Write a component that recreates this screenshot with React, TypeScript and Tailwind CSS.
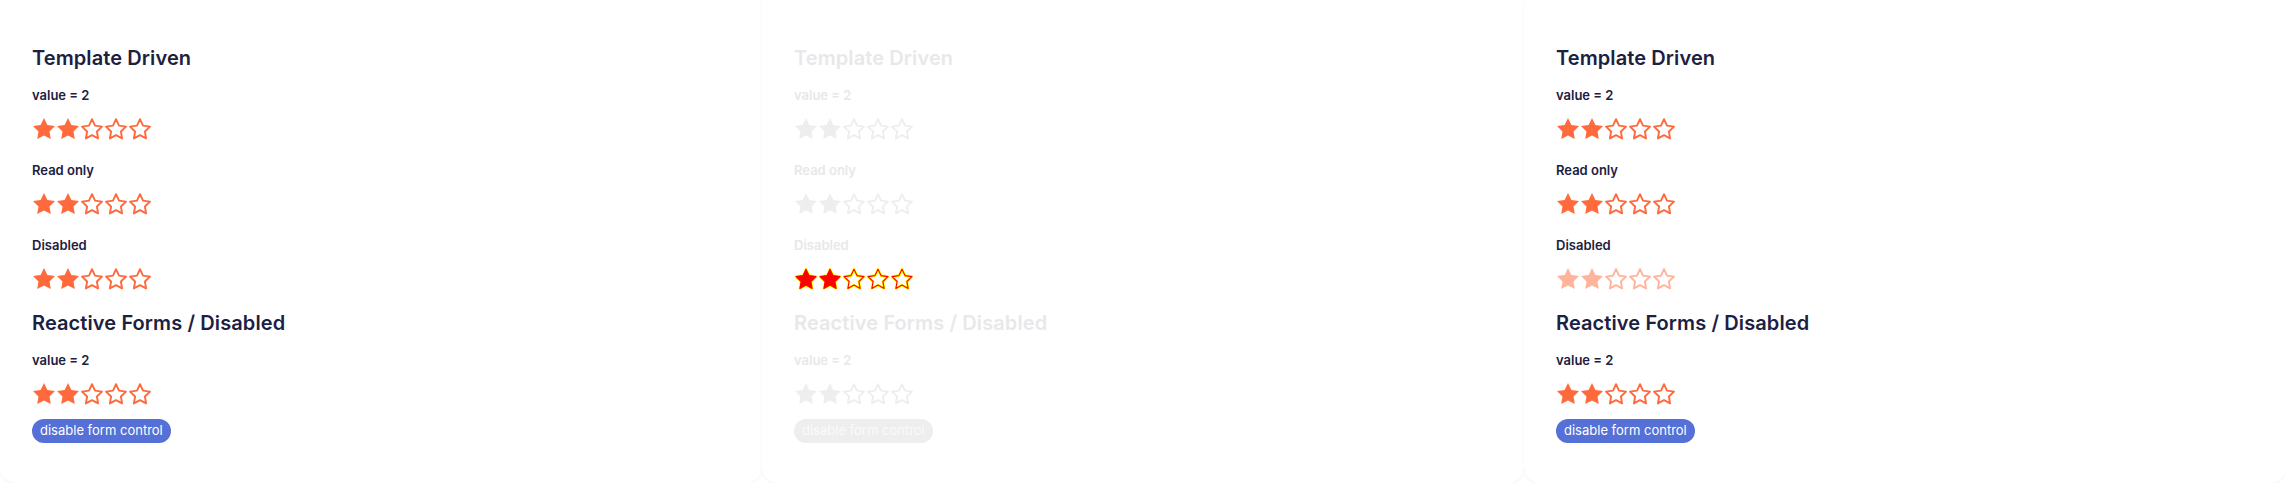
import React from 'react'

type Variant = 'normal' | 'faded' | 'soft' | 'alert'

const STAR_FULL =
  '12,1 15.4,7.9 23,9 17.5,14.4 18.8,22 12,18.4 5.2,22 6.5,14.4 1,9 8.6,7.9'
const STAR_LINE =
  '12,2.2 15,8.6 22,9.6 16.9,14.5 18.1,21.4 12,18.1 5.9,21.4 7.1,14.5 2,9.6 9,8.6'

function Star({ filled, variant }: { filled: boolean; variant: Variant }) {
  if (variant === 'alert') {
    return (
      <svg width="24" height="24" viewBox="0 0 24 24" className="block">
        <polygon points={STAR_LINE} fill={filled ? '#ff0000' : '#ffffff'} stroke="#ffff00" strokeWidth="2.6" strokeLinejoin="round" />
        <polygon points={STAR_LINE} fill={filled ? '#ff0000' : 'none'} stroke="#ff0000" strokeWidth="1.1" strokeLinejoin="round" />
      </svg>
    )
  }
  const color = variant === 'faded' ? '#eeeeef' : variant === 'soft' ? '#ffb49b' : '#ff6a3d'
  return (
    <svg width="24" height="24" viewBox="0 0 24 24" className="block">
      {filled ? (
        <polygon points={STAR_FULL} fill={color} strokeLinejoin="round" />
      ) : (
        <polygon points={STAR_LINE} fill="none" stroke={color} strokeWidth="1.9" strokeLinejoin="round" />
      )}
    </svg>
  )
}

function Rating({ value, variant, className }: { value: number; variant: Variant; className: string }) {
  return (
    <div className={`flex ${className}`}>
      {[1, 2, 3, 4, 5].map((n) => (
        <Star key={n} filled={n <= value} variant={variant} />
      ))}
    </div>
  )
}

function Panel({ faded, disabledVariant }: { faded: boolean; disabledVariant: Variant }) {
  const text = faded ? 'text-[#e8e8ea]' : 'text-[#1d2041]'
  const stars: Variant = faded ? 'faded' : 'normal'
  const heading = `text-[20px] leading-7 font-semibold tracking-[0.1px] ${text}`
  const label = `text-[13px] leading-4 font-semibold ${text}`

  return (
    <div className="h-[483px] rounded-b-2xl bg-white pl-8 pt-11 shadow-[0_1px_3px_rgba(0,0,0,0.05)]">
      <h2 className={heading}>Template Driven</h2>
      <p className={`${label} mt-[15px]`}>value = 2</p>
      <Rating value={2} variant={stars} className="mt-[14px]" />
      <p className={`${label} mt-[21px]`}>Read only</p>
      <Rating value={2} variant={stars} className="mt-[14px]" />
      <p className={`${label} mt-[21px]`}>Disabled</p>
      <Rating value={2} variant={disabledVariant} className="mt-[14px]" />
      <h2 className={`${heading} mt-[18px]`}>Reactive Forms / Disabled</h2>
      <p className={`${label} mt-[15px]`}>value = 2</p>
      <Rating value={2} variant={stars} className="mt-[14px]" />
      <button
        className={`mt-[13px] flex h-6 items-center rounded-xl px-2 text-[13px] ${
          faded ? 'bg-[#eeeeee] text-[#fafafa]' : 'bg-[#5570d6] text-white'
        }`}
      >
        disable form control
      </button>
    </div>
  )
}

export default function App() {
  return (
    <div className="grid h-[483px] w-[2286px] grid-cols-3 overflow-hidden bg-white" style={{ fontFamily: 'Inter, "Noto Sans", sans-serif' }}>
      <Panel faded={false} disabledVariant="normal" />
      <Panel faded={true} disabledVariant="alert" />
      <Panel faded={false} disabledVariant="soft" />
    </div>
  )
}
